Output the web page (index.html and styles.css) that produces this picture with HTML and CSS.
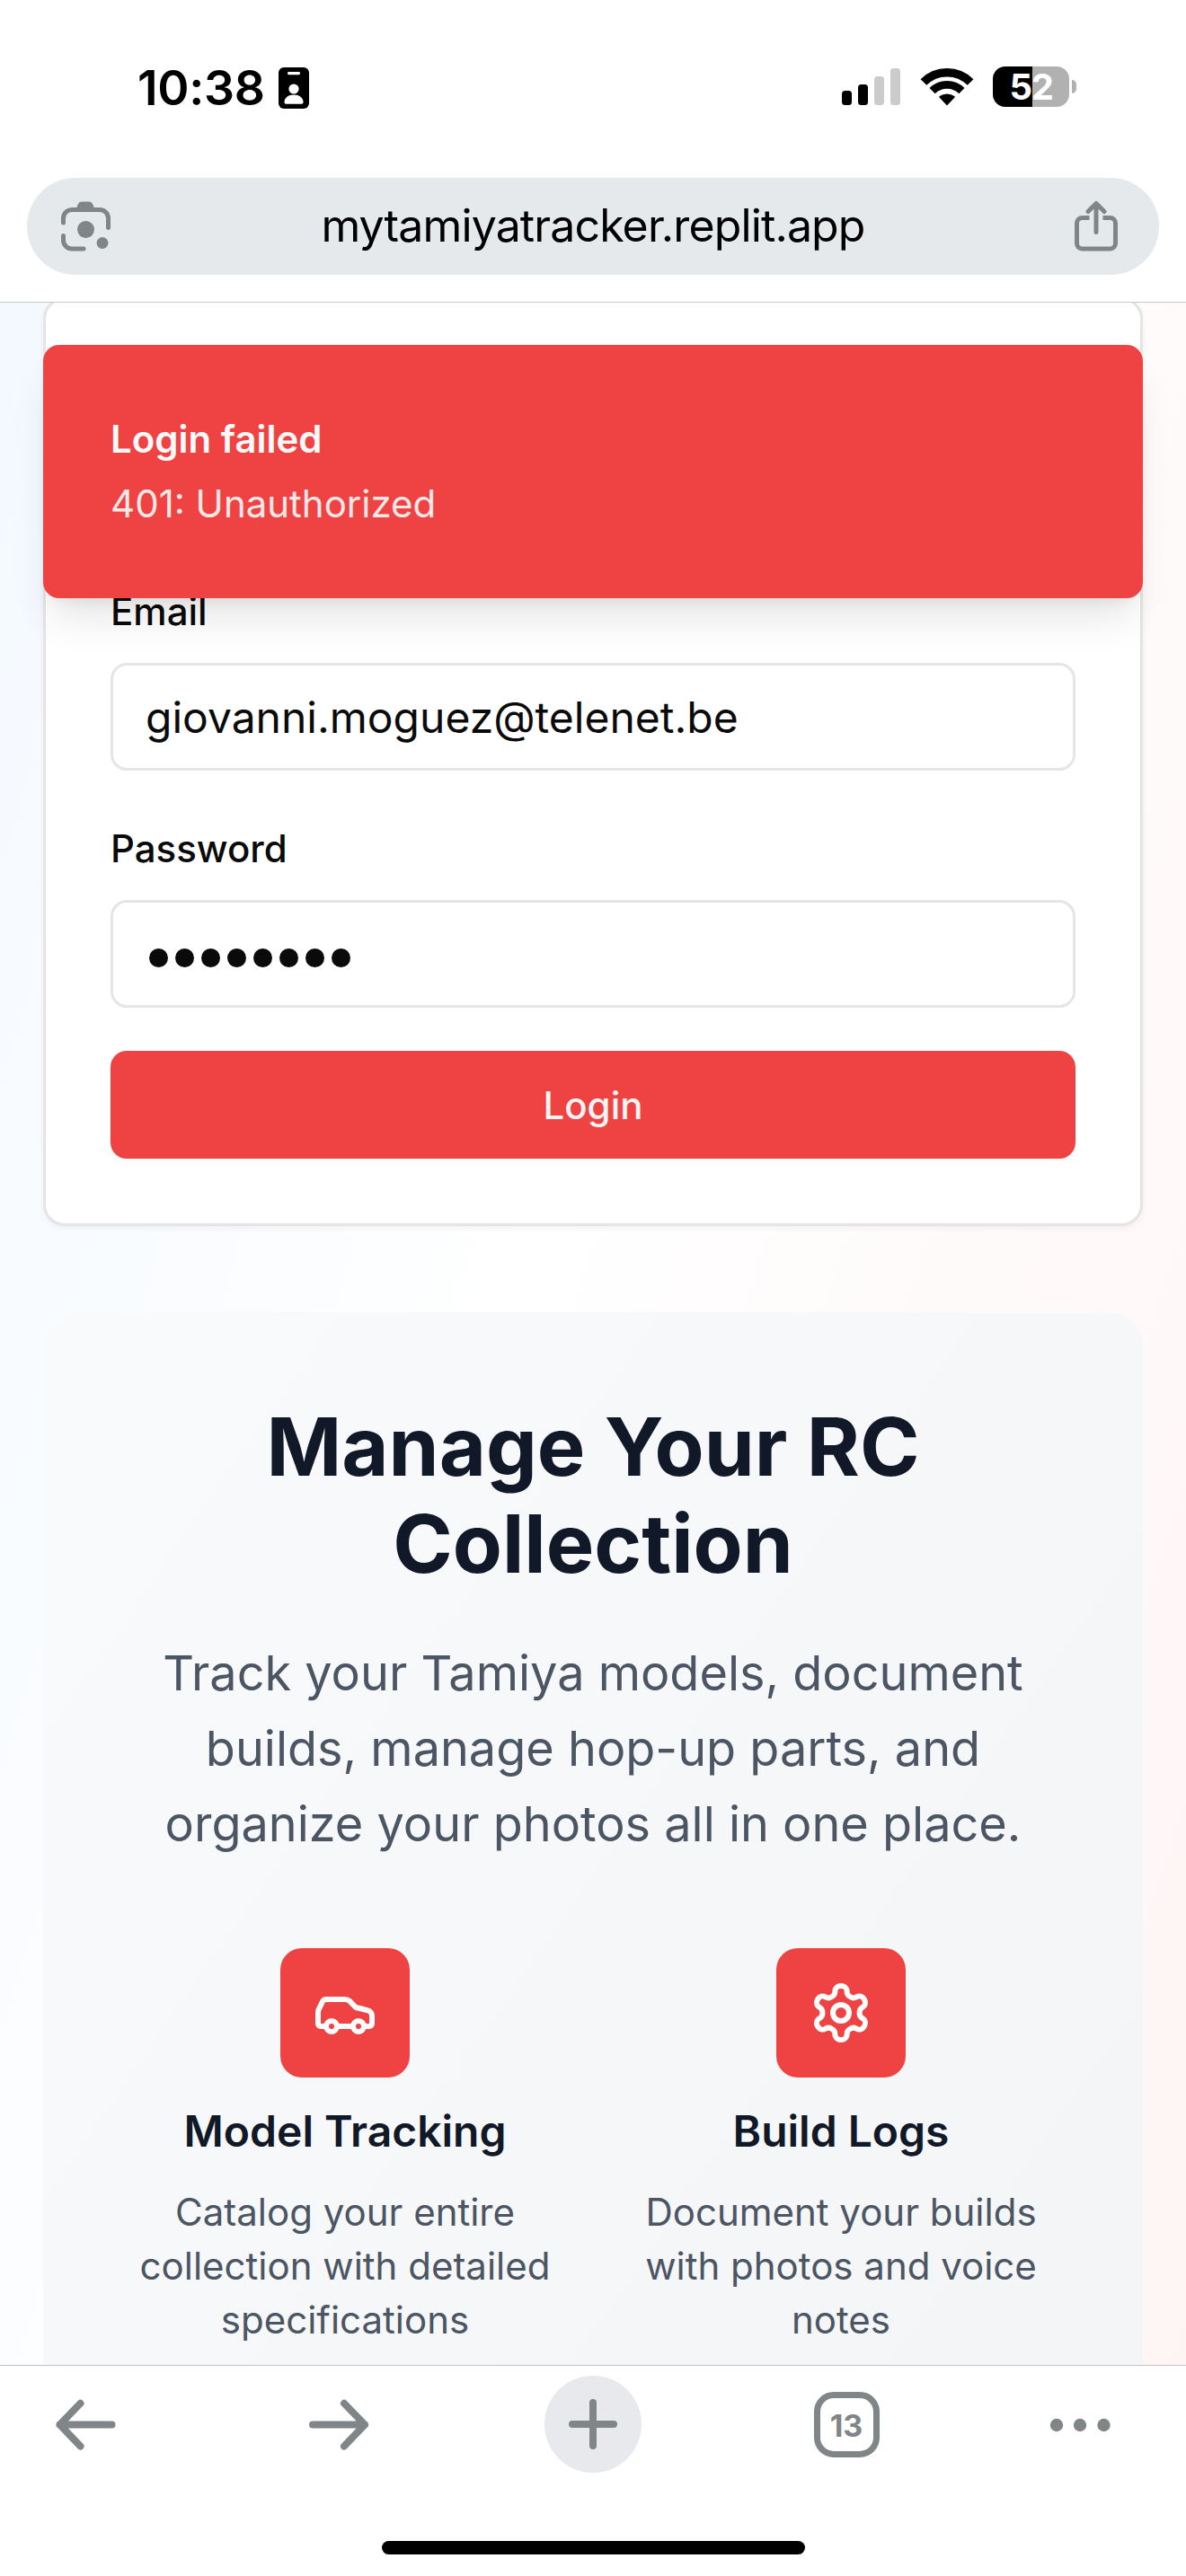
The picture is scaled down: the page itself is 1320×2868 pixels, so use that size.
FILE: index.html
```html
<!DOCTYPE html>
<html lang="en">
<head>
<meta charset="utf-8">
<title>mytamiyatracker.replit.app</title>
<link rel="stylesheet" href="styles.css">
</head>
<body>
<header class="browser-top">
  <div class="status-bar">
    <div class="status-left">
      <span class="time">10:38</span>
      <svg class="id-badge" width="34" height="46" viewBox="0 0 34 46"><rect width="34" height="46" rx="6"/><rect x="10" y="5" width="14" height="3.2" rx="1.4" fill="#fff"/><circle cx="17" cy="24" r="5.6" fill="#fff"/><path d="M6.5 38.5c0-4.500 4.500-8 10.500-8s10.500 3.500 10.500 8c0 1.500-.6 2.200-1.800 2.200H8.300c-1.200 0-1.800-.7-1.800-2.200z" fill="#fff"/></svg>
    </div>
    <div class="status-right">
      <svg width="66" height="42" viewBox="0 0 66 42"><rect y="25" width="11" height="16" rx="3.500"/><rect x="18" y="18" width="11" height="23" rx="3.500"/><rect x="36" y="9" width="11" height="32" rx="3.500" fill="#cbcbcb"/><rect x="54" width="11" height="41" rx="3.500" fill="#cbcbcb"/></svg>
      <svg class="wifi" width="58" height="44" viewBox="0 0 58 44"><g fill="none" stroke="#000"><path d="M2.900 16.500A37 37 0 0 1 55.100 16.500" stroke-width="9.500"/><path d="M12.600 26.200A23.200 23.200 0 0 1 45.400 26.200" stroke-width="8.800"/></g><path d="M29 42.500 20.500 33.500Q20 32.600 20.800 32.100A14 14 0 0 1 37.200 32.100Q38 32.600 37.500 33.500Z"/></svg>
      <div class="battery"><span>52</span></div>
      <i class="battery-nub"></i>
    </div>
  </div>
  <div class="address-bar">
    <svg width="56" height="56" viewBox="0 0 56 56" fill="none" stroke="#808587" stroke-width="5" stroke-linecap="round"><path d="M2.500 24V19A9.500 9.500 0 0 1 12 9.500H43A9.500 9.500 0 0 1 52.500 19V29.500M2.500 38.500V43.500A9.500 9.500 0 0 0 12 53H25"/><path d="M16 10 19 3Q20 .5 22.500 .5H31.500Q34 .5 35 3L38 10Z" fill="#808587" stroke="none"/><circle cx="27.500" cy="31.500" r="9.500" fill="#808587" stroke="none"/><circle cx="46" cy="46.500" r="6.500" fill="#808587" stroke="none"/></svg>
    <span class="url">mytamiyatracker.replit.app</span>
    <svg width="48" height="56" viewBox="0 0 48 56" fill="none" stroke="#808587" stroke-width="5" stroke-linecap="round" stroke-linejoin="round"><path d="M24 34.500V3M15 11.500 24 2.500 33 11.500"/><path d="M16.500 18.500H8.500A6 6 0 0 0 2.500 24.500V47A6 6 0 0 0 8.500 53H39.500A6 6 0 0 0 45.500 47V24.500A6 6 0 0 0 39.500 18.500H31.500" stroke-linecap="butt"/></svg>
  </div>
</header>

<main class="page">
  <section class="login-card">
    <form class="login-form">
      <div class="field">
        <label for="email">Email</label>
        <div class="input" id="email">giovanni.moguez@telenet.be</div>
      </div>
      <div class="field">
        <label for="password">Password</label>
        <div class="input masked" id="password"><i></i><i></i><i></i><i></i><i></i><i></i><i></i><i></i></div>
      </div>
      <button class="login-button" type="button">Login</button>
    </form>
  </section>

  <section class="promo">
    <h1>Manage Your RC Collection</h1>
    <p class="lead">Track your Tamiya models, document builds, manage hop-up parts, and organize your photos all in one place.</p>
    <div class="features">
      <article class="feature">
        <div class="tile"><svg viewBox="0 0 24 24"><path d="M19 17h2c.6 0 1-.4 1-1v-3c0-.9-.7-1.700-1.500-1.900C18.700 10.600 16 10 16 10s-1.300-1.400-2.200-2.300c-.5-.4-1.100-.7-1.800-.7H5c-.6 0-1.100.4-1.400.9l-1.400 2.900A3.700 3.700 0 0 0 2 12v4c0 .6.4 1 1 1h2"/><circle cx="7" cy="17" r="2"/><path d="M9 17h6"/><circle cx="17" cy="17" r="2"/></svg></div>
        <h2>Model Tracking</h2>
        <p>Catalog your entire collection with detailed specifications</p>
      </article>
      <article class="feature">
        <div class="tile"><svg viewBox="0 0 24 24"><path d="M12.220 2h-.44a2 2 0 0 0-2 2v.18a2 2 0 0 1-1 1.730l-.43.25a2 2 0 0 1-2 0l-.15-.08a2 2 0 0 0-2.730.73l-.22.38a2 2 0 0 0 .73 2.730l.15.1a2 2 0 0 1 1 1.720v.51a2 2 0 0 1-1 1.740l-.15.09a2 2 0 0 0-.73 2.730l.22.38a2 2 0 0 0 2.730.73l.15-.08a2 2 0 0 1 2 0l.43.25a2 2 0 0 1 1 1.730V20a2 2 0 0 0 2 2h.44a2 2 0 0 0 2-2v-.18a2 2 0 0 1 1-1.730l.43-.25a2 2 0 0 1 2 0l.15.08a2 2 0 0 0 2.730-.73l.22-.39a2 2 0 0 0-.73-2.730l-.15-.08a2 2 0 0 1-1-1.740v-.5a2 2 0 0 1 1-1.740l.15-.09a2 2 0 0 0 .73-2.730l-.22-.38a2 2 0 0 0-2.730-.73l-.15.08a2 2 0 0 1-2 0l-.43-.25a2 2 0 0 1-1-1.730V4a2 2 0 0 0-2-2z"/><circle cx="12" cy="12" r="3"/></svg></div>
        <h2>Build Logs</h2>
        <p>Document your builds with photos and voice notes</p>
      </article>
    </div>
  </section>

  <div class="toast" role="alert">
    <div class="toast-title">Login failed</div>
    <div class="toast-text">401: Unauthorized</div>
  </div>
</main>

<footer class="browser-bottom">
  <nav class="toolbar">
    <svg viewBox="0 0 108 108"><path d="M82.500 54.500H24.500M47.500 30.800 24.500 54.500 47.500 78.500"/></svg>
    <svg viewBox="0 0 108 108"><path d="M24 54.500H82M59 30.800 82 54.500 59 78.500"/></svg>
    <svg viewBox="0 0 108 108"><circle cx="54" cy="54" r="54" fill="#e8e9ec" stroke="none"/><path d="M31 54H77M54 30V78"/></svg>
    <div class="tabs"><span>13</span></div>
    <svg viewBox="0 0 108 108"><g fill="#808587" stroke="none"><circle cx="6" cy="55" r="7.200"/><circle cx="32" cy="55" r="7.200"/><circle cx="58.500" cy="55" r="7.200"/></g></svg>
  </nav>
  <div class="home-indicator"></div>
</footer>
</body>
</html>
```
FILE: styles.css
```css
* { box-sizing: border-box; }

body {
  margin: 0;
  width: 1320px;
  height: 2868px;
  display: flex;
  flex-direction: column;
  overflow: hidden;
  background: #fff;
  color: #0a0a0a;
  font-family: Inter, "Liberation Sans", sans-serif;
}

h1, h2, p { margin: 0; }
svg { display: block; flex: none; overflow: visible; }

/* Browser chrome, top */
.browser-top {
  flex: none;
  height: 337px;
  padding: 0 30px;
  border-bottom: 1px solid #c6c8ca;
}

.status-bar {
  height: 198px;
  padding: 74px 92px 0 123px;
  display: flex;
  justify-content: space-between;
  align-items: flex-start;
}

.status-left, .status-right { display: flex; align-items: flex-start; }

.time {
  width: 143px;
  margin: 0 14px 0 0;
  font-size: 53.5px;
  line-height: 48px;
  font-weight: 600;
  letter-spacing: -.3px;
  white-space: nowrap;
  color: #000;
}

.id-badge { margin-top: 1px; }
.status-right { color: #000; }
.status-right svg { margin-top: 2px; }
.status-right .wifi { margin: 1px 22px 0 22px; }

.battery {
  width: 85px;
  height: 45px;
  border-radius: 14px;
  background: linear-gradient(to right, #000 44px, #b1b1b1 44px);
  display: flex;
  align-items: center;
  justify-content: center;
}
.battery span {
  color: #fff;
  font-size: 40px;
  font-weight: 700;
  line-height: 45px;
  letter-spacing: -1.5px;
}
.battery-nub {
  width: 5px;
  height: 15px;
  margin: 15px 0 0 3px;
  border-radius: 0 5px 5px 0;
  background: #b1b1b1;
}

.address-bar {
  height: 108px;
  padding: 0 46px 0 38px;
  border-radius: 54px;
  background: #e6e9ec;
  display: flex;
  align-items: center;
  justify-content: space-between;
}
.url {
  color: #000;
  font-size: 50px;
  line-height: 60px;
  padding-bottom: 3px;
  letter-spacing: -.87px;
}

/* Page */
.page {
  position: relative;
  flex: none;
  height: 2296px;
  padding: 0 48px;
  overflow: hidden;
  background: linear-gradient(to bottom right, #eff6ff, #fff 50%, #fef2f2) 0 -1337px / 1320px 4400px no-repeat;
}

.login-card {
  height: 1034px;
  margin-top: -6px;
  padding: 0 72px 72px;
  border: 3px solid #e5e5e5;
  border-radius: 24px;
  background: #fff;
  box-shadow: 0 3px 6px rgba(0, 0, 0, .05);
  display: flex;
  flex-direction: column;
  justify-content: flex-end;
}

.field { margin-bottom: 66px; }
.field + .field { margin-bottom: 48px; }

.field label {
  display: block;
  margin-bottom: 36px;
  font-size: 42px;
  line-height: 42px;
  font-weight: 500;
}

.input {
  height: 120px;
  padding: 0 36px;
  border: 3px solid #e5e5e5;
  border-radius: 18px;
  background: #fff;
  font-size: 48px;
  display: flex;
  align-items: center;
}

.masked { gap: 8px; padding: 8px 40px 0; }
.masked i {
  width: 21px;
  height: 21px;
  border-radius: 50%;
  background: #0a0a0a;
}

.login-button {
  display: block;
  width: 100%;
  height: 120px;
  padding: 0;
  border: 0;
  border-radius: 18px;
  background: #ef4343;
  color: #fff5f5;
  font-family: inherit;
  font-size: 42px;
  font-weight: 500;
}

.promo {
  margin-top: 96px;
  height: 1764px;
  padding: 96px;
  border-radius: 36px;
  background: linear-gradient(to bottom right, #f9fafb, #f3f4f6);
  text-align: center;
}
.promo h1 {
  color: #111827;
  font-size: 90px;
  line-height: 108px;
  font-weight: 700;
}
.lead {
  margin-top: 48px;
  color: #4b5563;
  font-size: 54px;
  line-height: 84px;
}
.features {
  margin-top: 96px;
  display: grid;
  grid-template-columns: 1fr 1fr;
  gap: 72px;
}
.tile {
  width: 144px;
  height: 144px;
  margin: 0 auto 24px;
  border-radius: 24px;
  background: #ef4343;
  display: flex;
  align-items: center;
  justify-content: center;
}
.tile svg {
  width: 72px;
  height: 72px;
  fill: none;
  stroke: #fff;
  stroke-width: 2;
  stroke-linecap: round;
  stroke-linejoin: round;
}
.feature h2 {
  color: #111827;
  font-size: 48px;
  line-height: 72px;
  font-weight: 600;
}
.feature p {
  margin-top: 24px;
  color: #4b5563;
  font-size: 42px;
  line-height: 60px;
}

.toast {
  position: absolute;
  top: 47px;
  left: 48px;
  right: 48px;
  height: 282px;
  padding: 75px;
  border-radius: 18px;
  background: #ef4343;
  color: #fafafa;
  font-size: 42px;
  line-height: 60px;
  display: flex;
  flex-direction: column;
  gap: 12px;
  box-shadow: 0 30px 45px -9px rgba(0, 0, 0, .1), 0 12px 18px -12px rgba(0, 0, 0, .1);
}
.toast-title { font-weight: 600; }
.toast-text { opacity: .9; }

/* Browser chrome, bottom */
.browser-bottom {
  flex: none;
  height: 235px;
  border-top: 1px solid #c3c4c8;
  background: #fff;
}
.toolbar {
  padding: 11px 0 0 42px;
  display: flex;
  gap: 174px;
}
.toolbar svg, .tabs { flex: none; width: 108px; height: 108px; }
.toolbar svg {
  fill: none;
  stroke: #808587;
  stroke-width: 8;
  stroke-linecap: round;
  stroke-linejoin: round;
}
.tabs { display: flex; align-items: center; justify-content: center; }
.tabs span {
  width: 73px;
  height: 73px;
  border: 7px solid #808587;
  border-radius: 22px;
  color: #808587;
  font-size: 34px;
  line-height: 61px;
  font-weight: 700;
  text-align: center;
}
.home-indicator {
  width: 471px;
  height: 15px;
  margin: 76px auto 0;
  border-radius: 8px;
  background: #000;
}
```
